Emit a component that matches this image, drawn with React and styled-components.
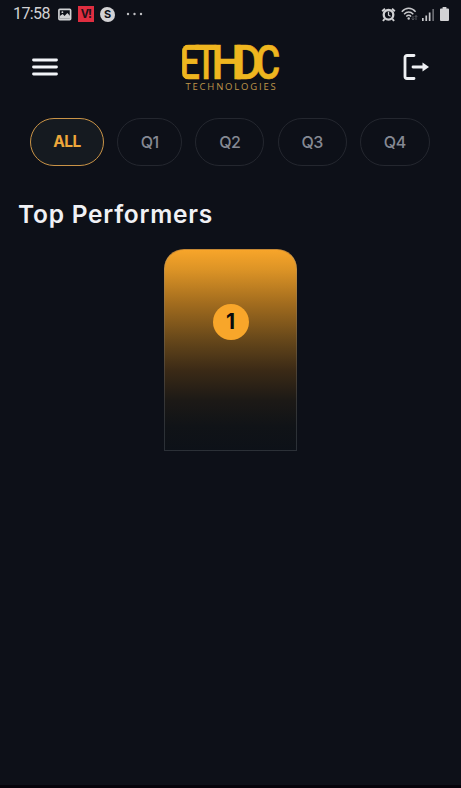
import React from "react";
import styled, { createGlobalStyle } from "styled-components";

const GlobalStyle = createGlobalStyle`
  * { box-sizing: border-box; }
  html, body { margin: 0; background: #0d1018; }
  body { font-family: Inter, "Open Sans", sans-serif; }
  svg { display: block; flex: none; overflow: visible; }
`;

const Screen = styled.main`
  display: flex;
  flex-direction: column;
  width: 461px;
  height: 788px;
  overflow: hidden;
  background: #0d1018;
  border-bottom: 3px solid #05030a;
`;

const StatusBar = styled.div`
  display: flex;
  justify-content: space-between;
  height: 28px;
  padding: 0 12px 0 13px;
`;

const StatusGroup = styled.div`
  display: flex;
  align-items: center;
  gap: ${(p) => p.$gap}px;
`;

const Clock = styled.span`
  width: 37px;
  margin-right: 2px;
  color: #d2d2d4;
  font: 400 16px/28px Roboto, sans-serif;
  letter-spacing: -0.6px;
  white-space: nowrap;
`;

const Header = styled.header`
  display: flex;
  align-items: flex-start;
  justify-content: space-between;
  height: 90px;
  padding: 16px 32px 0;
`;

const IconButton = styled.button`
  display: flex;
  align-items: center;
  justify-content: ${(p) => (p.$end ? "flex-end" : "flex-start")};
  width: 36px;
  height: 46px;
  padding: 0;
  border: 0;
  background: none;
`;

const Brand = styled.div`
  display: flex;
  flex-direction: column;
  align-items: center;
  width: 98px;
`;

const BrandTag = styled.span`
  padding-left: 2px;
  color: #bd954a;
  font: 400 9.5px/11px "Open Sans", sans-serif;
  letter-spacing: 1.8px;
  white-space: nowrap;
`;

const Filters = styled.nav`
  display: flex;
  gap: 13.2px;
  padding-left: 30px;
`;

const Pill = styled.button`
  width: ${(p) => p.$width}px;
  height: 48px;
  padding: 0;
  border: 1.5px solid ${(p) => (p.$active ? "#c99347" : "#24272f")};
  border-radius: 24px;
  background: ${(p) => (p.$active ? "#151a20" : "transparent")};
  color: ${(p) => (p.$active ? "#eda73b" : "#858993")};
  font: ${(p) => (p.$active ? 700 : 500)} ${(p) => (p.$active ? 15.5 : 16)}px/46px Inter, sans-serif;
  letter-spacing: -0.5px;
`;

const Title = styled.h1`
  margin: 33px 0 0 18px;
  color: #f0f1f5;
  font: 600 24.5px/30px Inter, sans-serif;
  letter-spacing: 0.75px;
  white-space: nowrap;
`;

const Podium = styled.section`
  display: flex;
  justify-content: center;
  margin-top: 20px;
`;

const Step = styled.div`
  display: flex;
  justify-content: center;
  width: 133px;
  height: 202px;
  padding-top: 54px;
  border: 1px solid rgba(125, 132, 142, 0.27);
  border-top-color: #c48735;
  border-radius: 20px 20px 0 0;
  background: linear-gradient(180deg, #f9a62a 0%, #dd9426 10%, #a26c1e 27%, #66471a 45%, #3b2a16 60%, #1c1916 75%, #101317 88%, #0d1118 100%) border-box;
`;

const Rank = styled.span`
  width: 36px;
  height: 36px;
  border-radius: 50%;
  background: #f8a62a;
  color: #090a0c;
  font: 700 21px/36px Inter, sans-serif;
  text-align: center;
`;

const logoLetters = [
  { char: "E", x: -2.4, scale: 0.74 },
  { char: "T", x: 13.5, scale: 0.72 },
  { char: "H", x: 29.6, scale: 0.93 },
  { char: "D", x: 52, scale: 0.88 },
  { char: "C", x: 73.5, scale: 0.78 },
];

function Logo() {
  return (
    <svg width="98" height="37" viewBox="0 0 98 37" role="img" aria-label="ETHDC">
      <clipPath id="rounded-mark"><rect y="0.3" width="120" height="35.6" rx="7" /></clipPath>
      <g fill="#efb61f" stroke="#efb61f" strokeWidth="0.6" clipPath="url(#rounded-mark)" fontFamily="Roboto, sans-serif" fontSize="48.5" fontWeight="500">
        {logoLetters.map(({ char, x, scale }) => (
          <text key={char} transform={`translate(${x} 35.3) scale(${scale} 1)`}>{char}</text>
        ))}
        <rect x="13" y="0.8" width="20" height="5.2" stroke="none" />
      </g>
    </svg>
  );
}

function MenuIcon() {
  return (
    <svg width="26" height="20" viewBox="0 0 26 20">
      <path d="M1.5 3h23M1.5 10h23M1.5 17h23" stroke="#f2f4f8" strokeWidth="2.8" strokeLinecap="round" />
    </svg>
  );
}

function LogoutIcon() {
  return (
    <svg width="27" height="28" viewBox="0 0 27 28">
      <path d="M12 2.5H5a2 2 0 0 0-2 2v19a2 2 0 0 0 2 2h7M11 14h11" fill="none" stroke="#eef0f3" strokeWidth="2.8" strokeLinecap="round" />
      <path d="M20.5 9.5 27 14l-6.5 4.5z" fill="#eef0f3" />
    </svg>
  );
}

function PictureIcon() {
  return (
    <svg width="14" height="13" viewBox="0 0 15 13">
      <rect x="1" y="1" width="12.5" height="11" rx="1" fill="none" stroke="#d0d1d3" strokeWidth="1.8" />
      <path d="M2 11V8l3-2 2 2 3-3 3 3v3z" fill="#d0d1d3" />
      <circle cx="4.7" cy="4" r="1" fill="#d0d1d3" />
    </svg>
  );
}

const RedBadge = styled.span`
  width: 16px;
  height: 16px;
  background: #df2e40;
  color: #231018;
  font: 700 12px/15px "Open Sans", sans-serif;
  letter-spacing: -0.5px;
  text-align: center;
`;

const RoundBadge = styled.span`
  width: 15px;
  height: 15px;
  margin-right: 5px;
  border-radius: 7px 8px 7px 8px;
  background: #d2d2d4;
  color: #111219;
  font: 700 11px/15px Inter, sans-serif;
  text-align: center;
`;

function MoreIcon() {
  return (
    <svg width="17" height="4" viewBox="0 0 17 4" fill="#bfc0c3">
      <circle cx="2" cy="2" r="1.2" /><circle cx="8.5" cy="2" r="1.2" /><circle cx="15" cy="2" r="1.2" />
    </svg>
  );
}

function AlarmIcon() {
  return (
    <svg width="15" height="15" viewBox="0 0 15 15" fill="none" stroke="#d0d1d3">
      <circle cx="7.5" cy="7.8" r="4.8" strokeWidth="2.3" />
      <path d="M1.2 4.2 4 1.7M11 1.7l2.8 2.5M3.5 12 2 14M11.5 12l1.5 2" strokeWidth="2" />
      <path d="M7.5 4.8v3.4l2 1" strokeWidth="1.2" />
    </svg>
  );
}

function WifiIcon() {
  return (
    <svg width="17" height="14" viewBox="0 0 17 14" fill="none">
      <path d="M.8 4.8c4.2-4.6 9.6-4.6 13.8 0M3.1 7.3c2.8-3 6.4-3 9.2 0M5.3 9.5c1.5-1.6 3.3-1.6 4.8 0" stroke="#c7c8cb" strokeWidth="1.5" />
      <circle cx="7.7" cy="11.5" r="1.2" fill="#c7c8cb" />
      <path d="M12 9v4M10.7 11.5 12 13l1.3-1.5M15 13V8.5M13.7 10 15 8.5l1.3 1.5" stroke="#54565d" />
    </svg>
  );
}

function SignalIcon() {
  return (
    <svg width="13" height="13" viewBox="0 0 13 13">
      <path d="M0 10h1.7v3H0zM3.4 7.5h1.7V13H3.4zM6.8 4.5h1.7V13H6.8z" fill="#c7c8cb" />
      <path d="M10.3 1H12v12h-1.7z" fill="#686a70" />
    </svg>
  );
}

function BatteryIcon() {
  return (
    <svg width="9" height="14" viewBox="0 0 9 14">
      <path d="M2.6 0h3.8v1.5H8q1 0 1 1v10.5q0 1-1 1H1q-1 0-1-1V2.5q0-1 1-1h1.6z" fill="#d2d2d4" />
    </svg>
  );
}

const filters = [
  { label: "ALL", width: 74, active: true },
  { label: "Q1", width: 65 },
  { label: "Q2", width: 69 },
  { label: "Q3", width: 69 },
  { label: "Q4", width: 70 },
];

export default function App() {
  return (
    <>
      <GlobalStyle />
      <Screen>
        <StatusBar>
          <StatusGroup $gap={6}>
            <Clock>17:58</Clock>
            <PictureIcon />
            <RedBadge>V!</RedBadge>
            <RoundBadge>S</RoundBadge>
            <MoreIcon />
          </StatusGroup>
          <StatusGroup $gap={4.7}>
            <AlarmIcon />
            <WifiIcon />
            <SignalIcon />
            <BatteryIcon />
          </StatusGroup>
        </StatusBar>
        <Header>
          <IconButton aria-label="Menu"><MenuIcon /></IconButton>
          <Brand>
            <Logo />
            <BrandTag>TECHNOLOGIES</BrandTag>
          </Brand>
          <IconButton $end aria-label="Log out"><LogoutIcon /></IconButton>
        </Header>
        <Filters>
          {filters.map(({ label, width, active }) => (
            <Pill key={label} $width={width} $active={active}>{label}</Pill>
          ))}
        </Filters>
        <Title>Top Performers</Title>
        <Podium>
          <Step><Rank>1</Rank></Step>
        </Podium>
      </Screen>
    </>
  );
}
